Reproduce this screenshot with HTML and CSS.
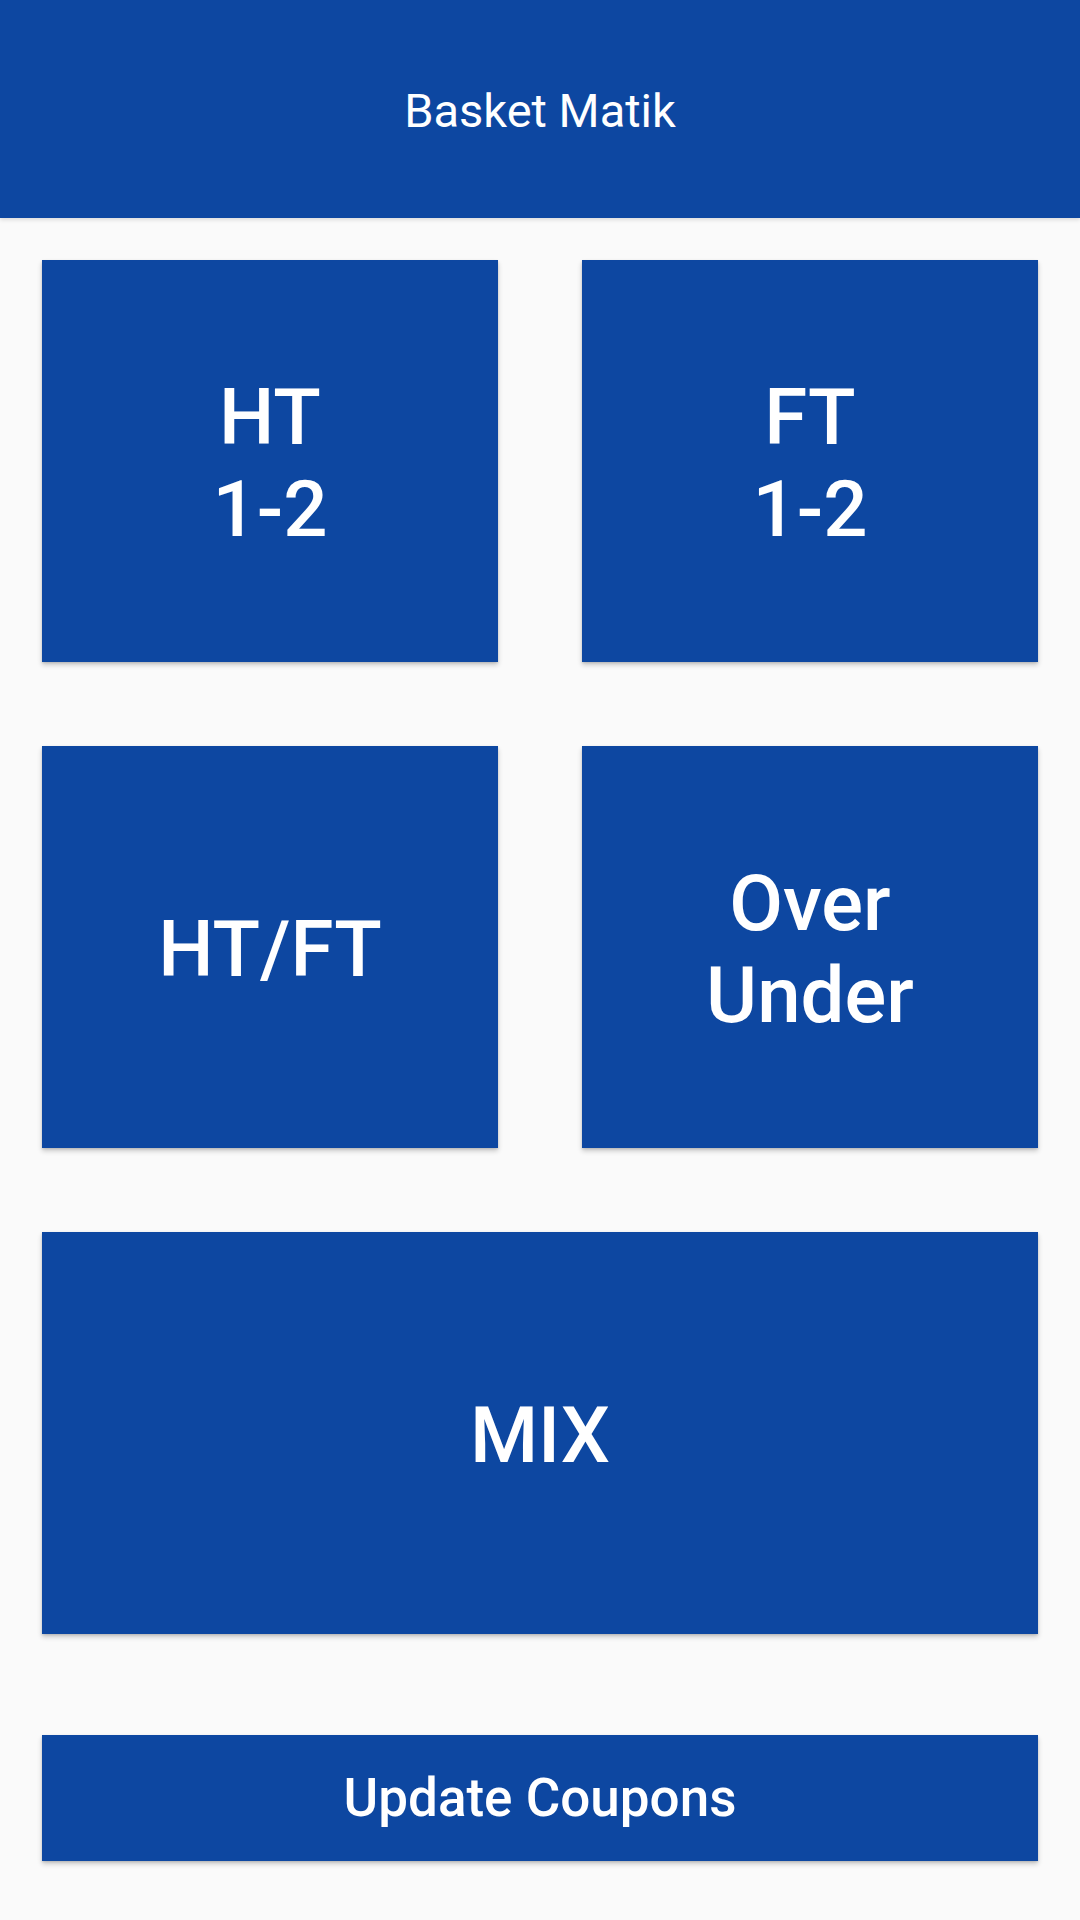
FILE: index.html
```html
<!DOCTYPE html>
<html lang="en">
<head>
<meta charset="utf-8">
<title>Basket Matik</title>
<link rel="stylesheet" href="styles.css">
</head>
<body>
<header class="appbar">
  <h1 class="appbar-title">Basket Matik</h1>
</header>
<main class="content">
  <div class="grid">
    <div class="tile">HT<br>1-2</div>
    <div class="tile">FT<br>1-2</div>
    <div class="tile">HT/FT</div>
    <div class="tile">Over<br>Under</div>
    <div class="tile tile-wide">MIX</div>
  </div>
  <button class="update-btn">Update Coupons</button>
</main>
</body>
</html>
```
FILE: styles.css
```css
html, body {
  margin: 0;
  padding: 0;
}
body {
  width: 1080px;
  height: 1920px;
  background: #fafafa;
  font-family: Roboto, "Liberation Sans", sans-serif;
  overflow: hidden;
}
.appbar {
  height: 218px;
  background: #0d47a1;
  display: flex;
  align-items: center;
  justify-content: center;
  box-shadow: 0 2px 4px rgba(0, 0, 0, 0.12);
  position: relative;
  z-index: 1;
}
.appbar-title {
  margin: 0;
  padding-top: 3px;
  color: #ffffff;
  font-size: 47px;
  font-weight: 400;
  line-height: 55px;
}
.content {
  padding: 42px 42px 0;
  display: flex;
  flex-direction: column;
}
.grid {
  display: grid;
  grid-template-columns: 1fr 1fr;
  grid-auto-rows: 402px;
  column-gap: 84px;
  row-gap: 84px;
}
.tile {
  background: #0d47a1;
  color: #ffffff;
  display: flex;
  align-items: center;
  justify-content: center;
  text-align: center;
  font-size: 78px;
  font-weight: 500;
  line-height: 92px;
  padding-top: 6px;
  box-sizing: border-box;
  box-shadow: 0 3px 5px rgba(0, 0, 0, 0.2), 0 1px 2px rgba(0, 0, 0, 0.12);
}
.tile-wide {
  grid-column: 1 / span 2;
}
.update-btn {
  margin-top: 101px;
  height: 126px;
  border: none;
  background: #0d47a1;
  color: #ffffff;
  font-family: Roboto, "Liberation Sans", sans-serif;
  font-size: 53px;
  font-weight: 500;
  padding: 0;
  box-shadow: 0 3px 5px rgba(0, 0, 0, 0.2), 0 1px 2px rgba(0, 0, 0, 0.12);
}
```
